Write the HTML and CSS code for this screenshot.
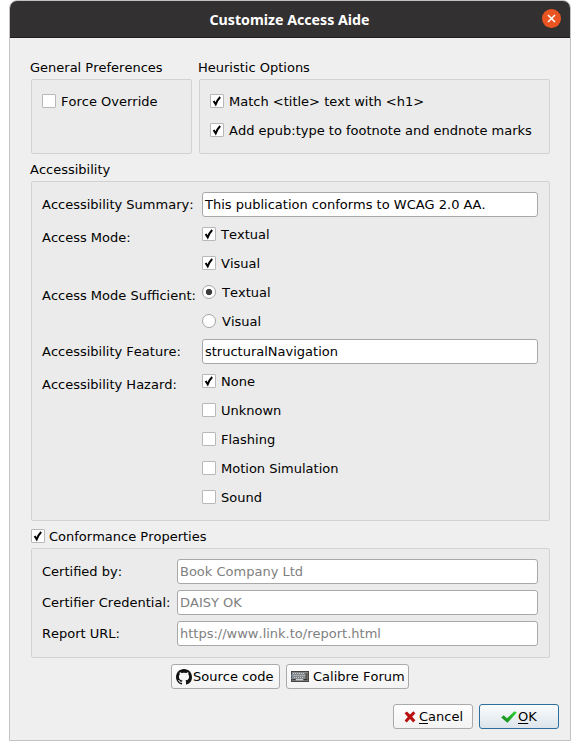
FILE: index.html
```html
<!DOCTYPE html>
<html lang="en">
<head>
<meta charset="utf-8">
<title>Customize Access Aide</title>
<link rel="stylesheet" href="styles.css">
</head>
<body>
<svg width="0" height="0" class="defs">
  <symbol id="tick" viewBox="0 0 14 14"><path d="M3.6 7L5.7 10.3C6.8 7.5 8.2 5 10.2 3" fill="none" stroke="#000" stroke-width="2"/></symbol>
</svg>
<main class="window">
  <header class="titlebar">
    <h1>Customize Access Aide</h1>
    <span class="close"><svg viewBox="0 0 19 19"><path d="M6 6l7 7M13 6l-7 7" stroke="#fff" stroke-width="1.5"/></svg></span>
  </header>
  <div class="content">
    <div class="top">
      <section class="general">
        <h2>General Preferences</h2>
        <div class="group"><div class="opt"><i class="box"></i>Force Override</div></div>
      </section>
      <section class="heuristic">
        <h2>Heuristic Options</h2>
        <div class="group">
          <div class="opt"><i class="box"><svg><use href="#tick"/></svg></i>Match &lt;title&gt; text with &lt;h1&gt;</div>
          <div class="opt"><i class="box"><svg><use href="#tick"/></svg></i>Add epub:type to footnote and endnote marks</div>
        </div>
      </section>
    </div>
    <section class="access">
      <h2>Accessibility</h2>
      <div class="group form">
        <span class="label">Accessibility Summary:</span>
        <div class="field">This publication conforms to WCAG 2.0 AA.</div>
        <span class="label low">Access Mode:</span>
        <div class="opts">
          <div class="opt"><i class="box"><svg><use href="#tick"/></svg></i>Textual</div>
          <div class="opt"><i class="box"><svg><use href="#tick"/></svg></i>Visual</div>
        </div>
        <span class="label low">Access Mode Sufficient:</span>
        <div class="opts">
          <div class="opt radio"><i class="dot on"></i>Textual</div>
          <div class="opt radio"><i class="dot"></i>Visual</div>
        </div>
        <span class="label">Accessibility Feature:</span>
        <div class="field">structuralNavigation</div>
        <span class="label low">Accessibility Hazard:</span>
        <div class="opts">
          <div class="opt"><i class="box"><svg><use href="#tick"/></svg></i>None</div>
          <div class="opt"><i class="box"></i>Unknown</div>
          <div class="opt"><i class="box"></i>Flashing</div>
          <div class="opt"><i class="box"></i>Motion Simulation</div>
          <div class="opt"><i class="box"></i>Sound</div>
        </div>
      </div>
    </section>
    <section class="conformance">
      <div class="opt heading"><i class="box"><svg><use href="#tick"/></svg></i>Conformance Properties</div>
      <div class="group form">
        <span class="label">Certified by:</span><div class="field hint">Book Company Ltd</div>
        <span class="label">Certifier Credential:</span><div class="field hint">DAISY OK</div>
        <span class="label">Report URL:</span><div class="field hint">https://www.link.to/report.html</div>
      </div>
    </section>
    <div class="links">
      <div class="button source">
        <svg width="16" height="16" viewBox="0 0 16 16"><path fill="#111" d="M8 0C3.58 0 0 3.58 0 8c0 3.54 2.29 6.53 5.47 7.59.4.07.55-.17.55-.38 0-.19-.01-.82-.01-1.49-2.01.37-2.53-.49-2.69-.94-.09-.23-.48-.94-.82-1.13-.28-.15-.68-.52-.01-.53.63-.01 1.08.58 1.23.82.72 1.21 1.87.87 2.33.66.07-.52.28-.87.51-1.07-1.78-.2-3.64-.89-3.64-3.95 0-.87.31-1.59.82-2.15-.08-.2-.36-1.02.08-2.12 0 0 .67-.21 2.2.82.64-.18 1.32-.27 2-.27s1.36.09 2 .27c1.53-1.04 2.2-.82 2.2-.82.44 1.1.16 1.92.08 2.12.51.56.82 1.27.82 2.15 0 3.07-1.87 3.75-3.65 3.95.29.25.54.73.54 1.48 0 1.07-.01 1.93-.01 2.2 0 .21.15.46.55.38A8.01 8.01 0 0 0 16 8c0-4.42-3.58-8-8-8z"/></svg>
        <span>Source code</span>
      </div>
      <div class="button forum">
        <svg width="18" height="11" viewBox="0 0 18 11"><rect x=".5" y=".5" width="17" height="10" fill="#85898c" stroke="#48423e"/><path d="M2 2.5h12M2.7 4.5h11M3 6.5h10" stroke="#c9cdd0" stroke-width="1" stroke-dasharray="1 1"/><path d="M1 3v5" stroke="#7194b0"/><path d="M14.5 2h2v6h-2z" fill="#59554f"/><path d="M1.5 8.6h3m8 0h4" stroke="#333" stroke-width="1.3"/><path d="M5 8.6h7" stroke="#ccc" stroke-width="1.2"/></svg>
        <span>Calibre Forum</span>
      </div>
    </div>
    <div class="actions">
      <div class="button cancel">
        <svg width="12" height="12" viewBox="0 0 12 12"><path d="M.6 2.3L2.8.4 6 3.6 9.3.3l2.1 2L8.2 5.7l3.2 3.6-2.2 2.1L6 8.1l-3.3 3.3-2.1-2L3.8 5.9z" fill="#b80f10"/></svg>
        <span><u>C</u>ancel</span>
      </div>
      <div class="button ok">
        <svg width="16" height="12" viewBox="0 0 16 12"><defs><linearGradient id="green" x1="0" y1="1" x2="1" y2="0"><stop offset="0" stop-color="#167d1c"/><stop offset="1" stop-color="#2cdb32"/></linearGradient></defs><path d="M.2 6.5L2.7 4.3 6 7.2 13.5.2 15.8 1.6 6.4 11.8z" fill="url(#green)"/></svg>
        <span><u>O</u>K</span>
      </div>
    </div>
  </div>
</main>
</body>
</html>
```
FILE: styles.css
```css
* { box-sizing: border-box; }
body { margin: 0; background: #fff; color: #000; font: 13px/16px "DejaVu Sans", sans-serif; font-kerning: none; }
.defs { display: none; }
.window { width: 562px; height: 741px; margin-left: 9px; border: 1px solid #c2c2c2; border-radius: 8px 8px 0 0; background: #efefef; overflow: hidden; }
.titlebar { position: relative; height: 37px; background: #333031; border-bottom: 1px solid #1f1d1e; display: flex; align-items: center; justify-content: center; }
h1 { margin: 2px 0 0; padding-right: 1px; color: #fff; font: bold 14.2px/18px "Noto Sans", sans-serif; }
.close { position: absolute; right: 9px; top: 8px; width: 19px; height: 19px; border-radius: 50%; background: #ea5420; }
.close svg { display: block; width: 19px; height: 19px; }
.content { padding: 22px 20px 0 21px; }
h2 { margin: 0 0 3px -1px; font: inherit; height: 16px; }
.top { display: flex; gap: 7px; }
.general { width: 161px; }
.heuristic { flex: 1; }
.group { border: 1px solid #d2d2d2; border-radius: 2px; background: #ebebeb; }
.top .group { height: 75px; padding: 10px 10px 0; }
.opt { height: 22px; display: flex; align-items: flex-start; gap: 5px; line-height: 24px; white-space: nowrap; }
.opt + .opt { margin-top: 7px; }
.box, .dot { width: 14px; height: 14px; margin-top: 4px; flex: none; background: #fff; border: 1px solid #b8b8b8; }
.box { border-radius: 1px; }
.box svg { display: block; width: 14px; height: 14px; margin: -1px; }
.dot { border-radius: 50%; border-color: #a5a5a5; }
.on { background: radial-gradient(circle, #3c3c3c 2.8px, #fff 3.6px); }
.radio { gap: 6px; }
.access { margin-top: 8px; }
.form { display: grid; column-gap: 6px; row-gap: 6px; align-items: start; align-content: start; padding: 10px 11px 0 10px; }
.access .form { grid-template-columns: 154px 1fr; height: 340px; grid-template-rows: 25px 52px 52px 25px auto; }
.label { line-height: 25px; white-space: nowrap; }
.low { margin-top: 2px; }
.field { height: 25px; border: 1px solid #a8a8a8; border-radius: 3px; background: #fff; padding: 0 2px; line-height: 23px; white-space: nowrap; color: #000; }
.hint { color: #808080; }
.heading { margin-top: 4px; gap: 4px; }
.conformance .form { grid-template-columns: 129px 1fr; height: 110px; margin-top: 1px; }
.links { display: flex; gap: 6px; margin: 6px 0 0 140px; }
.button { height: 25px; border: 1px solid #aaa; border-radius: 3px; background: linear-gradient(#fefefe, #f3f3f3); display: flex; align-items: center; white-space: nowrap; }
.source { width: 109px; padding-left: 4px; gap: 1px; }
.forum { width: 123px; padding-left: 4px; gap: 4px; }
.actions { display: flex; justify-content: flex-end; gap: 6px; margin: 15px -9px 0 0; }
.cancel, .ok { width: 80px; }
.cancel { padding-left: 10px; gap: 3px; }
.ok { padding-left: 21px; gap: 1px; border-color: #2c6f9c; background: linear-gradient(#fbfcfd, #dce5eb); }
u { text-decoration: underline; text-underline-offset: 2px; }
```
